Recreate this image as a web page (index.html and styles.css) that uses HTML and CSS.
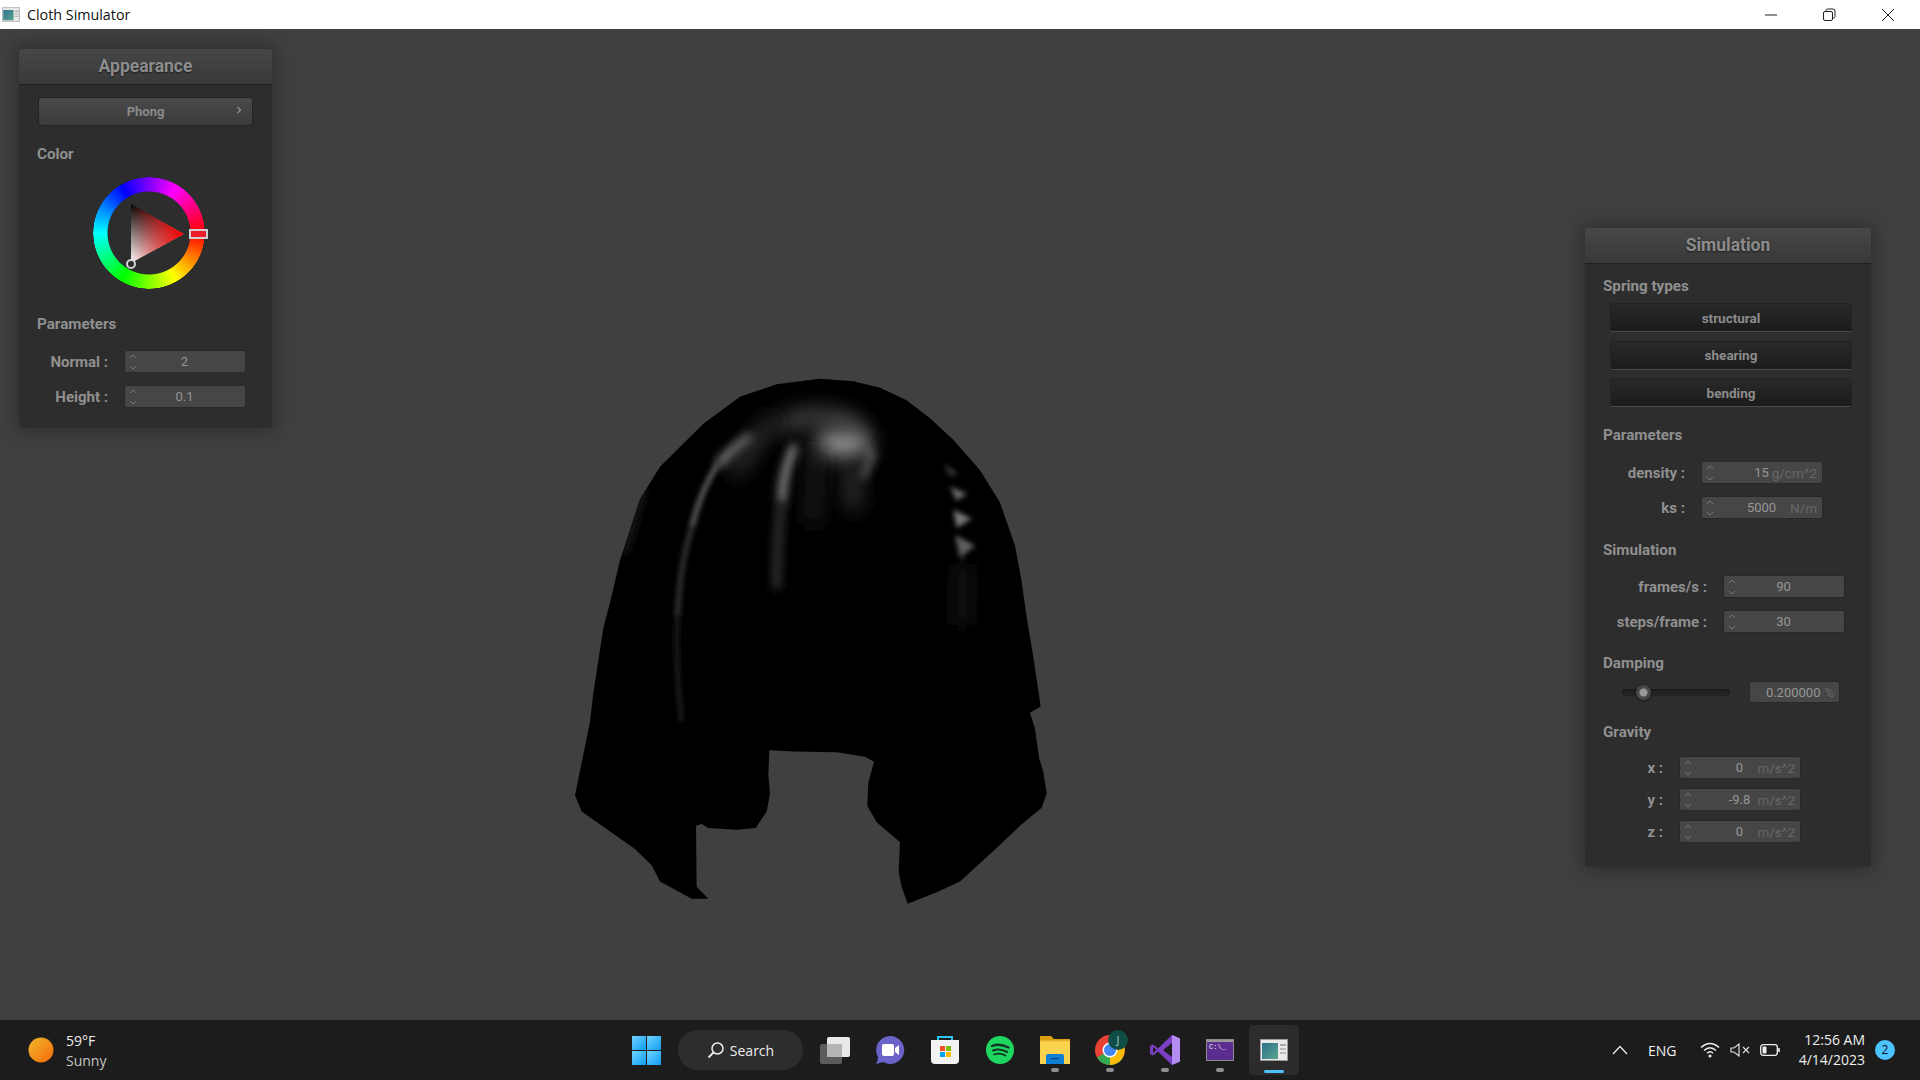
FILE: index.html
```html
<!DOCTYPE html>
<html lang="en">
<head>
    <meta charset="UTF-8">
    <title>Cloth Simulator</title>
    <link rel="stylesheet" href="styles.css">
</head>
<body>
    <svg class="defs" width="0" height="0">
        <defs>
            <linearGradient id="app-screen" x1="0" y1="0" x2="1" y2="1">
                <stop offset="0" stop-color="#2f6f8f"/>
                <stop offset="1" stop-color="#5aa58c"/>
            </linearGradient>
            <linearGradient id="tile" x1="0" y1="0" x2="1" y2="1">
                <stop offset="0" stop-color="#6fd5ff"/>
                <stop offset="1" stop-color="#109bf3"/>
            </linearGradient>
            <linearGradient id="sun" x1="0" y1="0" x2="1" y2="1">
                <stop offset="0" stop-color="#f2b92c"/>
                <stop offset="1" stop-color="#f3690b"/>
            </linearGradient>
            <linearGradient id="tri-value" x1="0" y1="0" x2="0" y2="1">
                <stop offset="0" stop-color="#000"/>
                <stop offset="1" stop-color="#fff"/>
            </linearGradient>
            <linearGradient id="tri-hue" x1="1" y1="0" x2="0" y2="0">
                <stop offset="0" stop-color="#f00"/>
                <stop offset="1" stop-color="#f00" stop-opacity="0"/>
            </linearGradient>
            <filter id="blur-wide" filterUnits="userSpaceOnUse" x="0" y="0" width="1500" height="1568"><feGaussianBlur stdDeviation="28"/></filter>
            <filter id="blur-mid" filterUnits="userSpaceOnUse" x="0" y="0" width="1500" height="1568"><feGaussianBlur stdDeviation="14"/></filter>
            <filter id="blur-thin" filterUnits="userSpaceOnUse" x="0" y="0" width="1500" height="1568"><feGaussianBlur stdDeviation="8"/></filter>
            <symbol id="spin" viewBox="0 0 8 18">
                <path d="M1 5 L4 2 L7 5 M1 13 L4 16 L7 13" fill="none" stroke="#777" stroke-width="1"/>
            </symbol>
            <symbol id="app" viewBox="0 0 28 22">
                <rect x="0.5" y="0.5" width="27" height="21" fill="#e9e9e9" stroke="#9a9a9a"/>
                <rect x="2" y="4" width="16" height="16" fill="url(#app-screen)"/>
                <rect x="20" y="5" width="6" height="2" fill="#aaa"/>
                <rect x="20" y="9" width="6" height="2" fill="#bbb"/>
                <rect x="20" y="13" width="6" height="2" fill="#bbb"/>
            </symbol>
        </defs>
    </svg>

    <header class="titlebar">
        <div class="title">
            <svg class="title-icon"><use href="#app"/></svg>
            <span>Cloth Simulator</span>
        </div>
        <div class="win-controls">
            <span class="win-btn"><svg width="14" height="14" viewBox="0 0 14 14"><path d="M1 7 H13" stroke="#222" stroke-width="1"/></svg></span>
            <span class="win-btn"><svg width="14" height="14" viewBox="0 0 14 14"><rect x="1.5" y="3.5" width="9" height="9" rx="1.5" fill="none" stroke="#222"/><path d="M4 3 V2.5 A1.5 1.5 0 0 1 5.5 1 H11 A2 2 0 0 1 13 3 V8.5 A1.5 1.5 0 0 1 11.5 10 H11" fill="none" stroke="#222"/></svg></span>
            <span class="win-btn win-close"><svg width="14" height="14" viewBox="0 0 14 14"><path d="M1 1 L13 13 M13 1 L1 13" stroke="#222" stroke-width="1"/></svg></span>
        </div>
    </header>

    <main class="viewport">
        <!-- cloth render -->
        <svg class="cloth" width="500" height="563" viewBox="0 0 1500 1568" preserveAspectRatio="none">
            <clipPath id="cloth-clip">
                <path id="cloth-shape" d="M780 55 L880 62 L960 80 L1040 115 L1110 165 L1180 225 L1260 310 L1320 400 L1365 520 L1385 620 L1400 720 L1420 830 L1442 968 L1410 985 L1425 1030 L1437 1110 L1450 1150 L1460 1210 L1445 1250 L1380 1300 L1300 1370 L1200 1455 L1130 1485 L1043 1517 L1025 1470 L1016 1430 L1020 1345 L1000 1330 L950 1290 L922 1245 L925 1180 L942 1122 L915 1108 L830 1095 L700 1093 L628 1090 L625 1160 L630 1210 L620 1260 L587 1306 L530 1311 L445 1306 L425 1295 L408 1300 L410 1470 L445 1503 L395 1503 L300 1455 L275 1410 L225 1365 L65 1260 L45 1215 L90 1010 L100 930 L130 750 L155 660 L180 560 L240 390 L300 300 L430 180 L540 105 L650 70 Z"/>
            </clipPath>
            <use href="#cloth-shape" fill="#000"/>
            <g clip-path="url(#cloth-clip)">
                <ellipse cx="850" cy="232" rx="85" ry="45" fill="#909090" filter="url(#blur-wide)"/>
                <path d="M660 185 Q780 135 900 190" fill="none" stroke="#484848" stroke-width="45" filter="url(#blur-wide)"/>
                <path d="M905 240 L935 270 L905 335" fill="none" stroke="#585858" stroke-width="24" filter="url(#blur-mid)"/>
                <path d="M870 300 L885 420" fill="none" stroke="#343434" stroke-width="44" filter="url(#blur-wide)"/>
                <path d="M575 215 Q510 255 475 295" fill="none" stroke="#808080" stroke-width="26" filter="url(#blur-mid)"/>
                <path d="M475 290 Q420 370 395 470" fill="none" stroke="#585858" stroke-width="16" filter="url(#blur-thin)"/>
                <path d="M395 470 Q360 570 352 720" fill="none" stroke="#383838" stroke-width="14" filter="url(#blur-thin)"/>
                <path d="M352 720 Q345 850 365 1010" fill="none" stroke="#1c1c1c" stroke-width="14" filter="url(#blur-thin)"/>
                <path d="M705 240 Q668 310 665 400" fill="none" stroke="#8c8c8c" stroke-width="24" filter="url(#blur-mid)"/>
                <path d="M665 400 Q650 500 650 640" fill="none" stroke="#343434" stroke-width="24" filter="url(#blur-mid)"/>
                <path d="M640 170 Q600 210 520 320" fill="none" stroke="#303030" stroke-width="44" filter="url(#blur-wide)"/>
                <path d="M770 250 L760 460" fill="none" stroke="#2c2c2c" stroke-width="30" filter="url(#blur-wide)"/>
                <path d="M1150 290 L1195 320 L1170 325 Z" fill="#3a3a3a" filter="url(#blur-thin)"/>
                <path d="M1170 355 L1220 375 L1190 395 Z" fill="#6c6c6c" filter="url(#blur-thin)"/>
                <path d="M1180 420 L1235 445 L1190 470 Z" fill="#787878" filter="url(#blur-thin)"/>
                <path d="M1185 490 L1245 520 L1200 555 Z" fill="#606060" filter="url(#blur-thin)"/>
                <path d="M1210 570 L1205 740" fill="none" stroke="#222" stroke-width="30" filter="url(#blur-wide)"/>
                <path d="M250 360 L190 540" fill="none" stroke="#242424" stroke-width="18" filter="url(#blur-mid)"/>
            </g>
        </svg>

        <!-- appearance window -->
        <section class="panel panel-appearance">
            <h2 class="panel-header">Appearance</h2>
            <div class="panel-body">
                <div class="dropdown">
                    <span>Phong</span>
                    <svg class="dropdown-arrow" width="6" height="8" viewBox="0 0 6 8"><path d="M1.5 1 L4.5 4 L1.5 7" fill="none" stroke="#8e8e8e" stroke-width="1.4"/></svg>
                </div>
                <h3 class="section-title color-title">Color</h3>
                <div class="wheel">
                    <div class="wheel-ring"></div>
                    <svg class="wheel-triangle" width="112" height="112" viewBox="0 0 112 112">
                        <polygon points="38,27 91,57 38,86" fill="url(#tri-value)"/>
                        <polygon points="38,27 91,57 38,86" fill="url(#tri-hue)"/>
                    </svg>
                    <span class="wheel-handle"></span>
                    <span class="wheel-dot"></span>
                </div>
                <h3 class="section-title params-title">Parameters</h3>
                <div class="rows">
                    <div class="row">
                        <label class="row-label">Normal :</label>
                        <div class="field"><svg class="spin"><use href="#spin"/></svg><span class="value">2</span></div>
                    </div>
                    <div class="row">
                        <label class="row-label">Height :</label>
                        <div class="field"><svg class="spin"><use href="#spin"/></svg><span class="value">0.1</span></div>
                    </div>
                </div>
            </div>
        </section>

        <!-- simulation window -->
        <section class="panel panel-simulation">
            <h2 class="panel-header">Simulation</h2>
            <div class="panel-body">
                <h3 class="section-title">Spring types</h3>
                <div class="toggle-list">
                    <button class="toggle">structural</button>
                    <button class="toggle">shearing</button>
                    <button class="toggle">bending</button>
                </div>

                <h3 class="section-title sim-params-title">Parameters</h3>
                <div class="rows">
                    <div class="row">
                        <label class="row-label">density :</label>
                        <div class="field"><svg class="spin"><use href="#spin"/></svg><span class="value">15</span><span class="unit">g/cm^2</span></div>
                    </div>
                    <div class="row">
                        <label class="row-label">ks :</label>
                        <div class="field"><svg class="spin"><use href="#spin"/></svg><span class="value">5000</span><span class="unit">N/m</span></div>
                    </div>
                </div>

                <h3 class="section-title sim-title sim-title-first">Simulation</h3>
                <div class="rows rows-wide">
                    <div class="row">
                        <label class="row-label">frames/s :</label>
                        <div class="field"><svg class="spin"><use href="#spin"/></svg><span class="value">90</span></div>
                    </div>
                    <div class="row">
                        <label class="row-label">steps/frame :</label>
                        <div class="field"><svg class="spin"><use href="#spin"/></svg><span class="value">30</span></div>
                    </div>
                </div>

                <h3 class="section-title sim-title">Damping</h3>
                <div class="slider-row">
                    <div class="slider"><span class="slider-knob"></span></div>
                    <div class="percent-box"><span>0.200000</span><span class="unit-inline">%</span></div>
                </div>

                <h3 class="section-title gravity-title">Gravity</h3>
                <div class="rows rows-short">
                    <div class="row">
                        <label class="row-label">x :</label>
                        <div class="field"><svg class="spin"><use href="#spin"/></svg><span class="value">0</span><span class="unit">m/s^2</span></div>
                    </div>
                    <div class="row">
                        <label class="row-label">y :</label>
                        <div class="field"><svg class="spin"><use href="#spin"/></svg><span class="value">-9.8</span><span class="unit">m/s^2</span></div>
                    </div>
                    <div class="row">
                        <label class="row-label">z :</label>
                        <div class="field"><svg class="spin"><use href="#spin"/></svg><span class="value">0</span><span class="unit">m/s^2</span></div>
                    </div>
                </div>
            </div>
        </section>
    </main>

    <footer class="taskbar">
        <div class="weather">
            <svg width="26" height="26" viewBox="0 0 26 26"><circle cx="13" cy="13" r="12.5" fill="url(#sun)"/></svg>
            <div class="weather-text">
                <span>59°F</span>
                <span class="weather-sub">Sunny</span>
            </div>
        </div>

        <div class="task-center">
            <svg class="start" width="29" height="29" viewBox="0 0 29 29">
                <rect width="14" height="14" fill="url(#tile)"/>
                <rect x="15" width="14" height="14" fill="url(#tile)"/>
                <rect y="15" width="14" height="14" fill="url(#tile)"/>
                <rect x="15" y="15" width="14" height="14" fill="url(#tile)"/>
            </svg>
            <div class="search">
                <svg width="18" height="18" viewBox="0 0 18 18"><circle cx="10.5" cy="7.5" r="5.5" fill="none" stroke="#eee" stroke-width="1.5"/><path d="M6.5 11.5 L1.5 16.5" stroke="#eee" stroke-width="1.8"/></svg>
                <span>Search</span>
            </div>
            <div class="task-slots">
                <div class="slot">
                    <svg width="30" height="30" viewBox="0 0 30 30">
                        <rect x="0" y="9" width="22" height="20" rx="2" fill="#5c5c5c"/>
                        <rect x="7" y="2" width="23" height="20" rx="2" fill="#e9e9e9"/>
                        <rect x="7" y="9" width="15" height="13" fill="#b5b5b5"/>
                    </svg>
                </div>
                <div class="slot">
                    <svg width="30" height="30" viewBox="1 0 30 30">
                        <path d="M16 1 A14 14 0 1 1 9 27 L2 29 Q4 26 4 22 A14 14 0 0 1 16 1 Z" fill="#6b63c9"/>
                        <rect x="8" y="9" width="12" height="12" rx="2" fill="#fff"/>
                        <path d="M21 13 L25 10 V20 L21 17 Z" fill="#fff"/>
                    </svg>
                </div>
                <div class="slot">
                    <svg width="30" height="30" viewBox="0 0 30 30">
                        <path d="M8 6 V2 H22 V6" fill="none" stroke="#2cc4f4" stroke-width="2"/>
                        <path d="M1 5 H29 V25 A4 4 0 0 1 25 29 H5 A4 4 0 0 1 1 25 Z" fill="#f3f3f3"/>
                        <rect x="10" y="11" width="5" height="5" fill="#f25022"/>
                        <rect x="16" y="11" width="5" height="5" fill="#7fba00"/>
                        <rect x="10" y="17" width="5" height="5" fill="#00a4ef"/>
                        <rect x="16" y="17" width="5" height="5" fill="#ffb900"/>
                    </svg>
                </div>
                <div class="slot">
                    <svg width="30" height="30" viewBox="0 0 30 30">
                        <circle cx="15" cy="15" r="14" fill="#1ed760"/>
                        <path d="M7 11 Q15 8 23.5 12.5" fill="none" stroke="#14351f" stroke-width="2.4" stroke-linecap="round"/>
                        <path d="M8 15.5 Q15 13 22 17" fill="none" stroke="#14351f" stroke-width="2.1" stroke-linecap="round"/>
                        <path d="M9 19.5 Q15 17.5 20.5 20.5" fill="none" stroke="#14351f" stroke-width="1.8" stroke-linecap="round"/>
                    </svg>
                </div>
                <div class="slot running">
                    <svg width="30" height="30" viewBox="0 0 30 30">
                        <path d="M0 1 H11 L14 4 H30 V10 H0 Z" fill="#d9a00f"/>
                        <rect x="0" y="5" width="30" height="24" fill="#fbd34f"/>
                        <rect x="0" y="5" width="30" height="1.5" fill="#e8b32a"/>
                        <path d="M6 21 A2 2 0 0 1 8 19 H22 A2 2 0 0 1 24 21 V29 H6 Z" fill="#0f7fd6"/>
                        <rect x="11" y="23" width="8" height="1.2" fill="#063f75"/>
                    </svg>
                </div>
                <div class="slot running">
                    <svg width="30" height="30" viewBox="0 0 30 30">
                        <circle cx="15" cy="15" r="15" fill="#e94235"/>
                        <path d="M15 15 L28 22.5 A15 15 0 0 1 15 30 A15 15 0 0 1 2 22.5 Z" fill="#34a853"/>
                        <path d="M15 8 H28 A15 15 0 0 1 15 30 Z" fill="#fbbc04"/>
                        <circle cx="15" cy="15" r="7.5" fill="#fff"/>
                        <circle cx="15" cy="15" r="6" fill="#4285f4"/>
                    </svg>
                    <span class="chrome-badge">J</span>
                </div>
                <div class="slot running">
                    <svg width="30" height="30" viewBox="0 0 30 30">
                        <path d="M22 0 L30 3.5 V26.5 L22 30 L8 16.5 L3 20.5 L0 19 V11 L3 9.5 L8 13.5 Z" fill="#7a3fc4"/>
                        <path d="M22 0 L30 3.5 V26.5 L22 30 Z" fill="#b48bf0"/>
                        <path d="M22 8 V22 L13 15 Z" fill="#1c1c1c"/>
                        <path d="M3 12 L6.5 15 L3 18 Z" fill="#1c1c1c"/>
                    </svg>
                </div>
                <div class="slot running">
                    <svg width="28" height="22" viewBox="0 0 28 22">
                        <rect x="0.5" y="0.5" width="27" height="21" fill="#5b2d91" stroke="#8a8a8a"/>
                        <rect x="1" y="1" width="26" height="2" fill="#9a9a9a"/>
                        <text x="3" y="10" class="cmd-text">C:\_</text>
                    </svg>
                </div>
                <div class="slot active">
                    <svg class="app-icon"><use href="#app"/></svg>
                </div>
            </div>
        </div>

        <div class="tray">
            <svg class="tray-chevron" width="16" height="10" viewBox="0 0 16 10"><path d="M1 9 L8 1.5 L15 9" fill="none" stroke="#eee" stroke-width="1.2"/></svg>
            <span class="tray-lang">ENG</span>
            <svg width="20" height="16" viewBox="0 0 20 16"><path d="M1 5.5 Q10 -2.5 19 5.5 M4 8.5 Q10 3 16 8.5 M7 11.2 Q10 8.5 13 11.2" fill="none" stroke="#eee" stroke-width="1.4"/><circle cx="10" cy="14" r="1.5" fill="#eee"/></svg>
            <svg width="20" height="14" viewBox="0 0 20 14"><path d="M1 5 H4 L9 1 V13 L4 9 H1 Z" fill="none" stroke="#ddd" stroke-width="1.2"/><path d="M13 4 L19 10 M19 4 L13 10" stroke="#ddd" stroke-width="1.2"/></svg>
            <svg width="20" height="12" viewBox="0 0 20 12"><rect x="0.7" y="0.7" width="16.6" height="10.6" rx="2.5" fill="none" stroke="#eee" stroke-width="1.3"/><rect x="2.5" y="2.5" width="4" height="7" rx="1" fill="#eee"/><rect x="18.2" y="4" width="1.6" height="4" fill="#eee"/></svg>
            <div class="clock">
                <span>12:56 AM</span>
                <span>4/14/2023</span>
            </div>
            <span class="notify">2</span>
        </div>
    </footer>
</body>
</html>
```

FILE: styles.css
```css
/* Global */
* {
    box-sizing: border-box;
}

html, body {
    margin: 0;
    height: 100%;
}

body {
    display: flex;
    flex-direction: column;
    height: 1080px;
    overflow: hidden;
    font-family: 'Roboto', sans-serif;
    background-color: #404040;
}

.defs {
    display: block;
    height: 0;
}

/* Title bar */
.titlebar {
    height: 29px;
    flex: none;
    display: flex;
    justify-content: space-between;
    align-items: center;
    background: #fff;
    color: #111;
    font-family: 'Open Sans', sans-serif;
    font-size: 14.3px;
}

.title {
    display: flex;
    align-items: center;
    gap: 7px;
    padding-left: 2px;
}

.title-icon {
    width: 18px;
    height: 15px;
}

.win-controls {
    display: flex;
    padding-right: 3px;
}

.win-btn {
    width: 58px;
    height: 29px;
    display: flex;
    align-items: center;
    justify-content: center;
}

.win-close {
    margin-left: 1px;
}

/* Viewport */
.viewport {
    position: relative;
    flex: 1;
    background: #404040;
}

.cloth {
    position: absolute;
    left: 560px;
    top: 330px;
}

/* Floating panels */
.panel {
    position: absolute;
    background: #2d2d2d;
    border-radius: 3px;
    box-shadow: 0 0 18px 4px rgba(0, 0, 0, 0.28);
    color: #929292;
}

.panel-appearance {
    left: 19px;
    top: 20px;
    width: 253px;
    height: 379px;
}

.panel-simulation {
    left: 1585px;
    top: 199px;
    width: 286px;
    height: 639px;
}

.panel-header {
    margin: 0;
    height: 36px;
    line-height: 34px;
    text-align: center;
    font-size: 17.5px;
    font-weight: 700;
    color: #8c8c8c;
    text-shadow: 0 1px 2px rgba(0, 0, 0, 0.6);
    background: linear-gradient(#474747, #393939);
    border-bottom: 1px solid #1f1f1f;
    border-radius: 3px 3px 0 0;
}

.panel-body {
    padding: 0 18px;
}

.section-title {
    margin: 12px 0 0;
    height: 20px;
    line-height: 20px;
    font-size: 15.2px;
    font-weight: 700;
    color: #909090;
}

/* Appearance panel */
.dropdown {
    position: relative;
    margin: 12px 1px 0 1px;
    height: 29px;
    line-height: 28px;
    text-align: center;
    font-size: 13px;
    font-weight: 700;
    color: #8a8a8a;
    background: linear-gradient(#494949, #3b3b3b);
    border: 1px solid #222;
    border-radius: 3px;
}

.dropdown-arrow {
    position: absolute;
    right: 10px;
    top: 8px;
}

.color-title {
    margin-top: 18px;
}

.wheel {
    position: relative;
    width: 112px;
    height: 112px;
    margin: 13px 0 0 55.5px;
}

.wheel-ring {
    width: 112px;
    height: 112px;
    border-radius: 50%;
    background: conic-gradient(from 90deg, #f00, #ff0, #0f0, #0ff, #00f, #f0f, #f00);
    -webkit-mask: radial-gradient(circle, transparent 41px, #000 42px, #000 55.5px, transparent 56px);
    mask: radial-gradient(circle, transparent 41px, #000 42px, #000 55.5px, transparent 56px);
}

.wheel-triangle {
    position: absolute;
    left: 0;
    top: 0;
}

.wheel-handle {
    position: absolute;
    left: 96px;
    top: 52px;
    width: 19px;
    height: 10px;
    background: #ee1c2c;
    border: 2px solid #cfcfcf;
}

.wheel-dot {
    position: absolute;
    left: 33px;
    top: 82px;
    width: 10px;
    height: 10px;
    border-radius: 50%;
    background: #2d2d2d;
    border: 2px solid #d4d4d4;
}

.params-title {
    margin-top: 25px;
}

/* Label + number field rows */
.rows {
    display: flex;
    flex-direction: column;
    gap: 12px;
    margin-top: 16px;
}

.row {
    display: flex;
    align-items: center;
    gap: 16px;
}

.row-label {
    width: 71px;
    text-align: right;
    font-size: 15px;
    font-weight: 700;
    color: #909090;
    white-space: nowrap;
}

.field {
    width: 122px;
    height: 23px;
    padding: 0 5px 0 4px;
    display: grid;
    grid-template-columns: 1fr auto 1fr;
    align-items: center;
    font-size: 13px;
    background: #464646;
    border: 1px solid #282828;
    border-radius: 3px;
    color: #969696;
}

.spin {
    width: 8px;
    height: 18px;
}

.unit {
    text-align: right;
    font-size: 13.5px;
    color: #666;
    white-space: nowrap;
}

/* Simulation panel */
.panel-simulation .row-label {
    width: 82px;
}

.panel-simulation .rows-wide .row-label {
    width: 104px;
}

.panel-simulation .rows-short {
    gap: 9px;
    margin-top: 14px;
}

.panel-simulation .rows-short .row-label {
    width: 60px;
}

.toggle-list {
    display: flex;
    flex-direction: column;
    gap: 8.5px;
    margin: 7px 1px 0 7px;
}

.toggle {
    height: 29px;
    padding: 0;
    font-family: inherit;
    font-size: 13.5px;
    font-weight: 700;
    color: #8c8c8c;
    background: linear-gradient(#292929, #1b1b1b);
    border: 1px solid #232323;
    border-bottom-color: #4a4a4a;
    border-radius: 3px;
}

.sim-params-title {
    margin-top: 18px;
}

.rows-wide {
    margin-top: 15px;
}

.sim-title {
    margin-top: 20px;
}

.sim-title-first {
    margin-top: 21px;
}

.slider-row {
    display: flex;
    align-items: center;
    margin: 8px 0 0 19px;
}

.slider {
    position: relative;
    width: 108px;
    height: 7px;
    border-radius: 4px;
    background: #232323;
    box-shadow: inset 0 1px 2px rgba(0, 0, 0, 0.4);
}

.slider-knob {
    position: absolute;
    left: 14px;
    top: -4px;
    width: 15px;
    height: 15px;
    border-radius: 50%;
    background: radial-gradient(circle, #979797 0, #979797 3.5px, #4a4a4a 4.5px, #3c3c3c 100%);
    box-shadow: 0 1px 3px rgba(0, 0, 0, 0.5);
}

.percent-box {
    width: 91px;
    height: 22px;
    margin-left: 19px;
    padding-right: 5px;
    display: flex;
    align-items: center;
    justify-content: flex-end;
    gap: 4px;
    font-size: 13px;
    background: #464646;
    border: 1px solid #282828;
    border-radius: 3px;
    color: #969696;
}

.unit-inline {
    color: #666;
}

.gravity-title {
    margin-top: 19px;
}

/* Taskbar */
.taskbar {
    height: 60px;
    flex: none;
    display: grid;
    grid-template-columns: 632px 1fr 308px;
    align-items: center;
    background: #1c1c1c;
    color: #eee;
    font-family: 'Open Sans', sans-serif;
    font-size: 14px;
}

.weather {
    display: flex;
    align-items: center;
    gap: 12px;
    padding-left: 28px;
}

.weather-text {
    display: flex;
    flex-direction: column;
    gap: 1px;
    line-height: 19px;
}

.weather-sub {
    color: #c4c4c4;
}

.task-center {
    display: flex;
    align-items: center;
}

.start {
    flex: none;
}

.search {
    width: 125px;
    height: 40px;
    margin-left: 17px;
    display: flex;
    align-items: center;
    justify-content: center;
    gap: 5px;
    background: #2d2d2d;
    border-radius: 20px;
}

.task-slots {
    display: flex;
    margin-left: 4px;
}

.slot {
    position: relative;
    width: 55px;
    height: 50px;
    display: flex;
    align-items: center;
    justify-content: center;
}

.slot.running::after {
    content: "";
    position: absolute;
    left: 23.5px;
    bottom: 3px;
    width: 8px;
    height: 4px;
    border-radius: 2px;
    background: #8f8f8f;
}

.slot.active {
    width: 50px;
    margin-left: 2px;
    background: #2c2c2c;
    border-radius: 5px;
}

.slot.active::after {
    content: "";
    position: absolute;
    left: 15px;
    bottom: 2px;
    width: 20px;
    height: 3px;
    border-radius: 2px;
    background: #4cc2ff;
}

.app-icon {
    width: 28px;
    height: 22px;
}

.chrome-badge {
    position: absolute;
    left: 26px;
    top: 5px;
    width: 20px;
    height: 20px;
    line-height: 20px;
    text-align: center;
    font-size: 11px;
    border-radius: 50%;
    background: #0f4d45;
    color: #a9c9c4;
}

.cmd-text {
    font-family: 'Liberation Mono', monospace;
    font-size: 7px;
    fill: #eee;
}

.tray {
    display: flex;
    align-items: center;
    gap: 10px;
    padding-right: 25px;
}

.tray-chevron {
    margin-right: 10px;
}

.tray-lang {
    margin-right: 13px;
}

.clock {
    display: flex;
    flex-direction: column;
    align-items: flex-end;
    line-height: 20px;
    margin-left: auto;
}

.notify {
    flex: none;
    width: 20px;
    height: 20px;
    line-height: 20px;
    text-align: center;
    font-size: 12px;
    border-radius: 50%;
    background: #4cc2ff;
    color: #111;
}
```
